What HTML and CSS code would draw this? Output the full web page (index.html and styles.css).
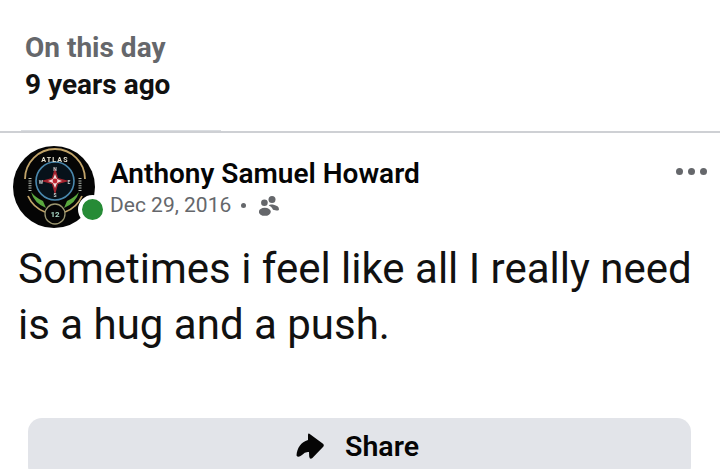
FILE: index.html
```html
<!DOCTYPE html>
<html lang="en">
<head>
<meta charset="utf-8">
<title>Memory</title>
<link rel="stylesheet" href="styles.css">
</head>
<body>
<header class="memory-head">
  <div class="memory-title">On this day</div>
  <div class="memory-age">9 years ago</div>
</header>
<div class="rule"><div class="rule-tab"></div></div>
<article class="post">
  <div class="post-head">
    <div class="avatar">
      <svg class="avatar-art" viewBox="0 0 82 82" width="82" height="82">
        <circle cx="41" cy="41" r="41" fill="#050505"/>
        <path d="M12 33A30 30 0 0 1 72 33" fill="none" stroke="#c2a469" stroke-width="1.8"/>
        <path d="M15 50A30 30 0 0 0 32 66M69 50A30 30 0 0 1 52 66" fill="none" stroke="#c2a469" stroke-width="1.8"/>
        <circle cx="42" cy="35" r="19" fill="#07121a" stroke="#4a88ad" stroke-width="1.6"/>
        <path d="M42 21L45 32L56 35L45 38L42 49L39 38L28 35L39 32Z" fill="#a3242f"/>
        <path d="M42 28L44 33L49 35L44 37L42 42L40 37L35 35L40 33Z" fill="#f3dedb"/>
        <circle cx="42" cy="35" r="2.4" fill="#c02632"/>
        <text x="42" y="25" class="avatar-dir" text-anchor="middle">N</text>
        <text x="42" y="51" class="avatar-dir" text-anchor="middle">S</text>
        <text x="28" y="38" class="avatar-dir" text-anchor="middle">W</text>
        <text x="56" y="38" class="avatar-dir" text-anchor="middle">E</text>
        <path d="M18 46Q21 57 33 62L30 55Q23 52 18 46ZM66 46Q63 57 51 62L54 55Q61 52 66 46Z" fill="#5aa83e"/>
        <path d="M17 32V46M67 32V46" stroke="#b6bdb4" stroke-width="3" stroke-dasharray="1 1.4"/>
        <circle cx="42" cy="68" r="10" fill="#050505" stroke="#9b9670" stroke-width="1.3"/>
        <text x="42" y="71" class="avatar-num" text-anchor="middle">12</text>
        <text x="42" y="16" class="avatar-word" text-anchor="middle">ATLAS</text>
      </svg>
      <span class="status-dot"></span>
    </div>
    <div class="post-meta">
      <div class="author">Anthony Samuel Howard</div>
      <div class="post-sub">
        <span>Dec 29, 2016</span>
        <span class="sep"></span>
        <svg class="friends" viewBox="0 0 20 20" width="20" height="20">
          <circle cx="13" cy="3.5" r="3.5" fill="#65676b"/>
          <circle cx="5.4" cy="6.8" r="3.3" fill="#65676b"/>
          <ellipse cx="5.8" cy="15.8" rx="6" ry="4" fill="#65676b"/>
          <path d="M9.8 9.6C10.6 8.6 12.6 8.4 14.6 8.8C17.8 9.4 20 11 20 13.2C20 14.4 18.8 14.6 17.4 14.4L14 13.8C13.4 12 11.8 10.6 9.8 9.6Z" fill="#65676b"/>
        </svg>
      </div>
    </div>
    <div class="more"><i></i><i></i><i></i></div>
  </div>
  <p class="post-text">Sometimes i feel like all I really need is a hug and a push.</p>
  <button class="share" type="button">
    <svg class="share-icon" viewBox="0 0 28 26" width="28" height="26">
      <path d="M13.4 0.8L27 10.8Q28.6 12.4 27 14L16.4 25Q13.8 27 13.2 23.4L13 19Q9 18.4 6 22Q2 25.4 0.5 22.4C1 15 5 9 12 7L12 2Q12.2 0 13.4 0.8Z" fill="#050505"/>
    </svg>
    <span>Share</span>
  </button>
</article>
</body>
</html>
```
FILE: styles.css
```css
html, body {
  margin: 0;
  padding: 0;
  height: 469px;
  overflow: hidden;
  background: #fff;
  font-family: Roboto, "Liberation Sans", sans-serif;
}
.memory-head {
  height: 130px;
  box-sizing: border-box;
  padding: 29px 25px 0;
  font-size: 28px;
  line-height: 37px;
  font-weight: 700;
}
.memory-title { color: #65676b; }
.memory-age { color: #111; }
.rule {
  height: 2px;
  margin-top: 1px;
  background: #ced0d4;
  position: relative;
}
.rule-tab {
  position: absolute;
  left: 21px;
  top: -1px;
  width: 200px;
  height: 1px;
  background: #dadde1;
}
.post { padding: 13px 0 0; }
.post-head {
  display: flex;
  align-items: flex-start;
  padding: 0 13px 0 13px;
}
.avatar {
  position: relative;
  width: 82px;
  height: 82px;
  flex: none;
}
.avatar-art {
  display: block;
  filter: blur(0.4px);
}
.avatar-word {
  font: 700 7px Roboto, sans-serif;
  letter-spacing: 1.2px;
  fill: #e8e4d3;
}
.avatar-num {
  font: 700 8px Roboto, sans-serif;
  fill: #a8d8c6;
}
.avatar-dir {
  font: 700 5px Roboto, sans-serif;
  fill: #c9d2d0;
}
.status-dot {
  position: absolute;
  left: 65px;
  top: 49px;
  width: 21px;
  height: 21px;
  border-radius: 50%;
  background: #268b36;
  border: 4px solid #fff;
}
.post-meta {
  margin-left: 15px;
  padding-top: 12px;
  flex: 1;
}
.author {
  font-size: 28px;
  line-height: 32px;
  font-weight: 600;
  color: #050505;
}
.post-sub {
  display: flex;
  align-items: center;
  margin-top: 1px;
  height: 28px;
  font-size: 21px;
  line-height: 28px;
  color: #65676b;
}
.sep {
  width: 5px;
  height: 5px;
  border-radius: 50%;
  background: #65676b;
  margin: 0 14px 0 10px;
}
.friends {
  display: block;
  flex: none;
  margin-left: -1px;
  margin-top: 2px;
}
.more {
  display: flex;
  gap: 5px;
  padding-top: 22px;
}
.more i {
  width: 7px;
  height: 7px;
  border-radius: 50%;
  background: #65676b;
}
.post-text {
  margin: 13px 18px 0;
  font-size: 42px;
  line-height: 56px;
  color: #111;
}
.share {
  display: flex;
  align-items: center;
  justify-content: center;
  gap: 21px;
  width: 663px;
  height: 62px;
  margin: 65px 0 0 28px;
  padding: 0 4px 6px 0;
  border: 0;
  border-radius: 14px;
  background: #e2e4e9;
  font: 600 28.5px Roboto, sans-serif;
  color: #050505;
}
.share-icon { display: block; }
```
